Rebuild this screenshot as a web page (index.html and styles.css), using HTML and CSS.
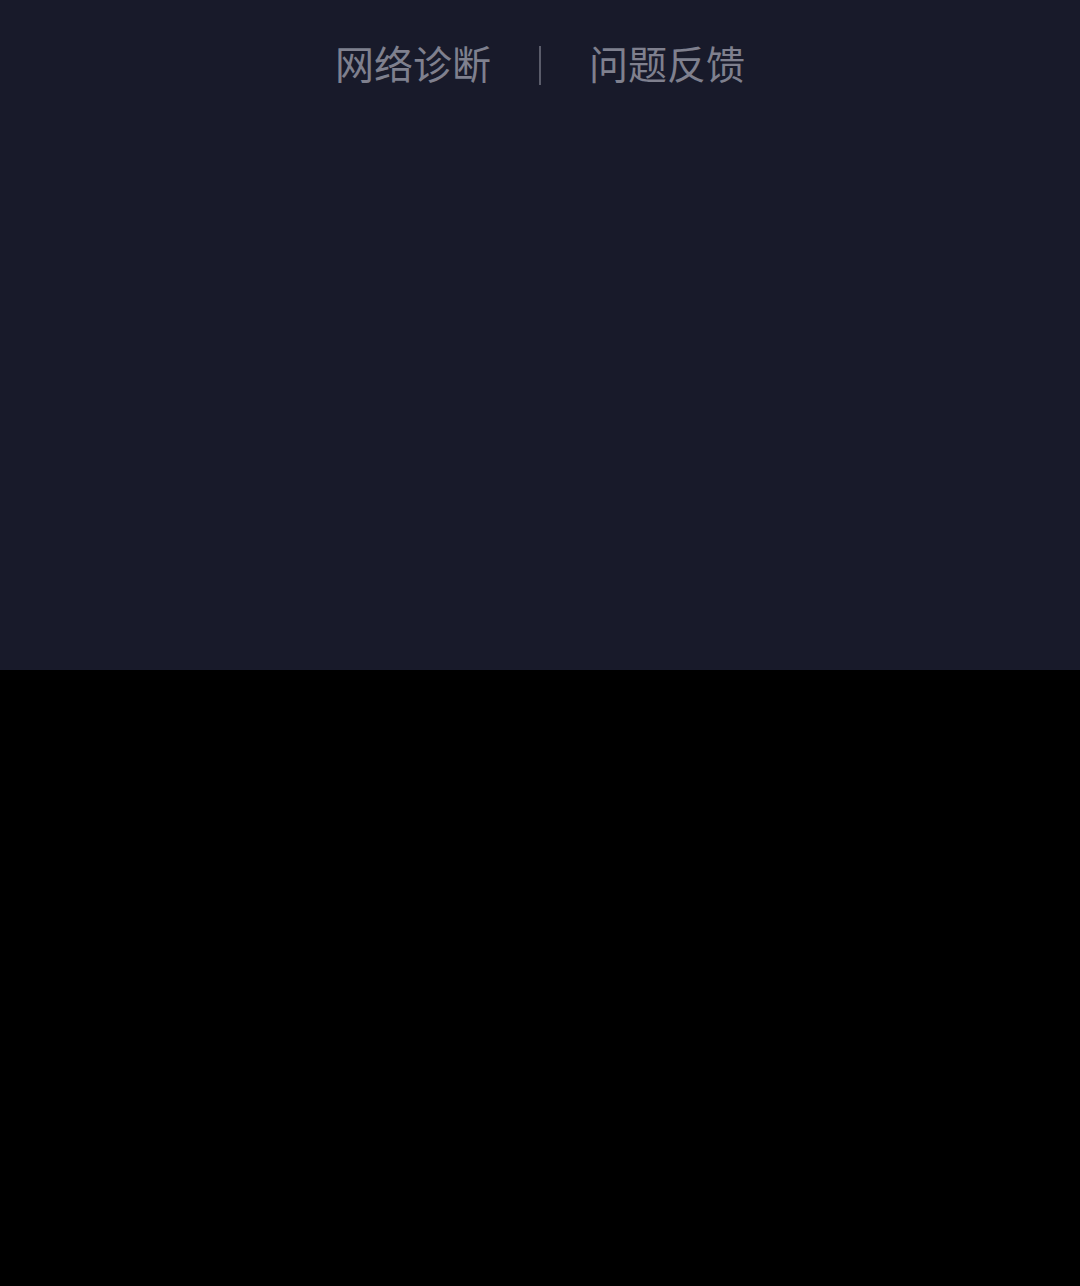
FILE: index.html
```html
<!DOCTYPE html>
<html lang="zh">
<head>
<meta charset="utf-8">
<link rel="stylesheet" href="styles.css">
</head>
<body>
<div class="panel">
  <div class="links">
    <span class="link">网络诊断</span>
    <span class="sep"></span>
    <span class="link">问题反馈</span>
  </div>
</div>
<div class="rest"></div>
</body>
</html>
```
FILE: styles.css
```css
html, body {
  margin: 0;
  padding: 0;
  background: #000;
}
.panel {
  height: 670px;
  background: #181a2a;
  display: flex;
  flex-direction: column;
  align-items: center;
}
.links {
  display: flex;
  align-items: center;
  margin-top: 37px;
  gap: 48px;
}
.link {
  font-family: "Noto Sans CJK SC", sans-serif;
  font-size: 39px;
  line-height: 50px;
  padding-bottom: 6px;
  color: #7f808e;
}
.sep {
  width: 2px;
  height: 39px;
  background: #5a5c6a;
}
.rest {
  height: 616px;
  background: #000;
}
```
